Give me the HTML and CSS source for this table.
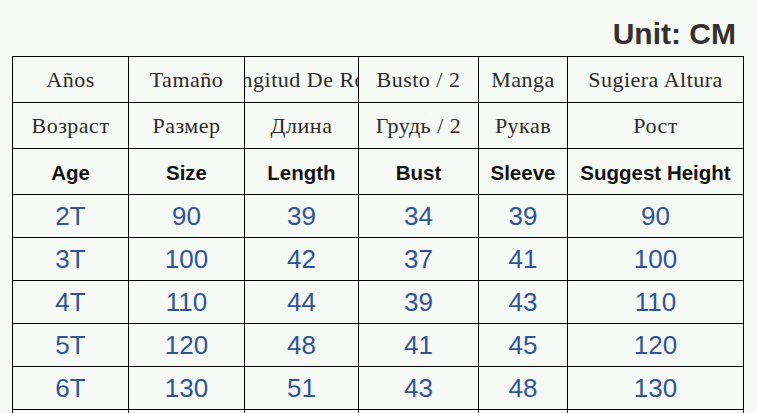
FILE: index.html
```html
<!DOCTYPE html>
<html lang="es">
<head>
<meta charset="utf-8">
<title>Size chart</title>
<link rel="stylesheet" href="styles.css">
</head>
<body>
<div class="sheet">
  <div class="unit">Unit: CM</div>
  <table class="chart">
    <colgroup>
      <col class="c1"><col class="c2"><col class="c3"><col class="c4"><col class="c5"><col class="c6">
    </colgroup>
    <tr class="hrow serif">
      <td>Años</td><td>Tamaño</td><td class="clip"><div class="clipbox"><span>Longitud De Ropa</span></div></td><td>Busto / 2</td><td>Manga</td><td>Sugiera Altura</td>
    </tr>
    <tr class="hrow serif">
      <td>Возраст</td><td>Размер</td><td>Длина</td><td>Грудь / 2</td><td>Рукав</td><td>Рост</td>
    </tr>
    <tr class="hrow bold">
      <td>Age</td><td>Size</td><td>Length</td><td>Bust</td><td>Sleeve</td><td>Suggest Height</td>
    </tr>
    <tr class="drow"><td>2T</td><td>90</td><td>39</td><td>34</td><td>39</td><td>90</td></tr>
    <tr class="drow"><td>3T</td><td>100</td><td>42</td><td>37</td><td>41</td><td>100</td></tr>
    <tr class="drow"><td>4T</td><td>110</td><td>44</td><td>39</td><td>43</td><td>110</td></tr>
    <tr class="drow"><td>5T</td><td>120</td><td>48</td><td>41</td><td>45</td><td>120</td></tr>
    <tr class="drow"><td>6T</td><td>130</td><td>51</td><td>43</td><td>48</td><td>130</td></tr>
    <tr class="drow"><td>7T</td><td>140</td><td>54</td><td>45</td><td>50</td><td>140</td></tr>
  </table>
</div>
</body>
</html>
```
FILE: styles.css
```css
html, body {
  margin: 0;
  padding: 0;
  background: #f7f9f7;
  overflow: hidden;
}
.sheet {
  width: 757px;
  height: 413px;
  overflow: hidden;
  background: #f7f9f7;
}
.unit {
  height: 56px;
  box-sizing: border-box;
  padding: 17px 21px 0 0;
  text-align: right;
  font-family: "Liberation Sans", Arial, sans-serif;
  font-weight: bold;
  font-size: 30px;
  line-height: 34px;
  color: #33302f;
}
.chart {
  margin-left: 12px;
  border-collapse: collapse;
  table-layout: fixed;
  width: 731px;
}
.c1 { width: 116px; }
.c2 { width: 116px; }
.c3 { width: 114px; }
.c4 { width: 120px; }
.c5 { width: 89px; }
.c6 { width: 176px; }
.chart td {
  border: 1px solid #000;
  padding: 0;
  text-align: center;
  vertical-align: middle;
  white-space: nowrap;
}
.serif td {
  height: 45px;
  font-family: "Liberation Serif", "Times New Roman", serif;
  font-size: 22px;
  letter-spacing: 0.5px;
  color: #2c2a2a;
}
.bold td {
  height: 43px;
  padding-top: 2px;
  font-family: "Liberation Sans", Arial, sans-serif;
  font-weight: bold;
  font-size: 20.5px;
  color: #111;
}
.drow td {
  height: 41px;
  padding-top: 1px;
  font-family: "Liberation Sans", Arial, sans-serif;
  font-size: 26px;
  color: #2f5597;
}
.clip { overflow: hidden; }
.clipbox {
  display: flex;
  justify-content: center;
  overflow: hidden;
  width: 114px;
}
.clipbox span { flex: none; }
```
